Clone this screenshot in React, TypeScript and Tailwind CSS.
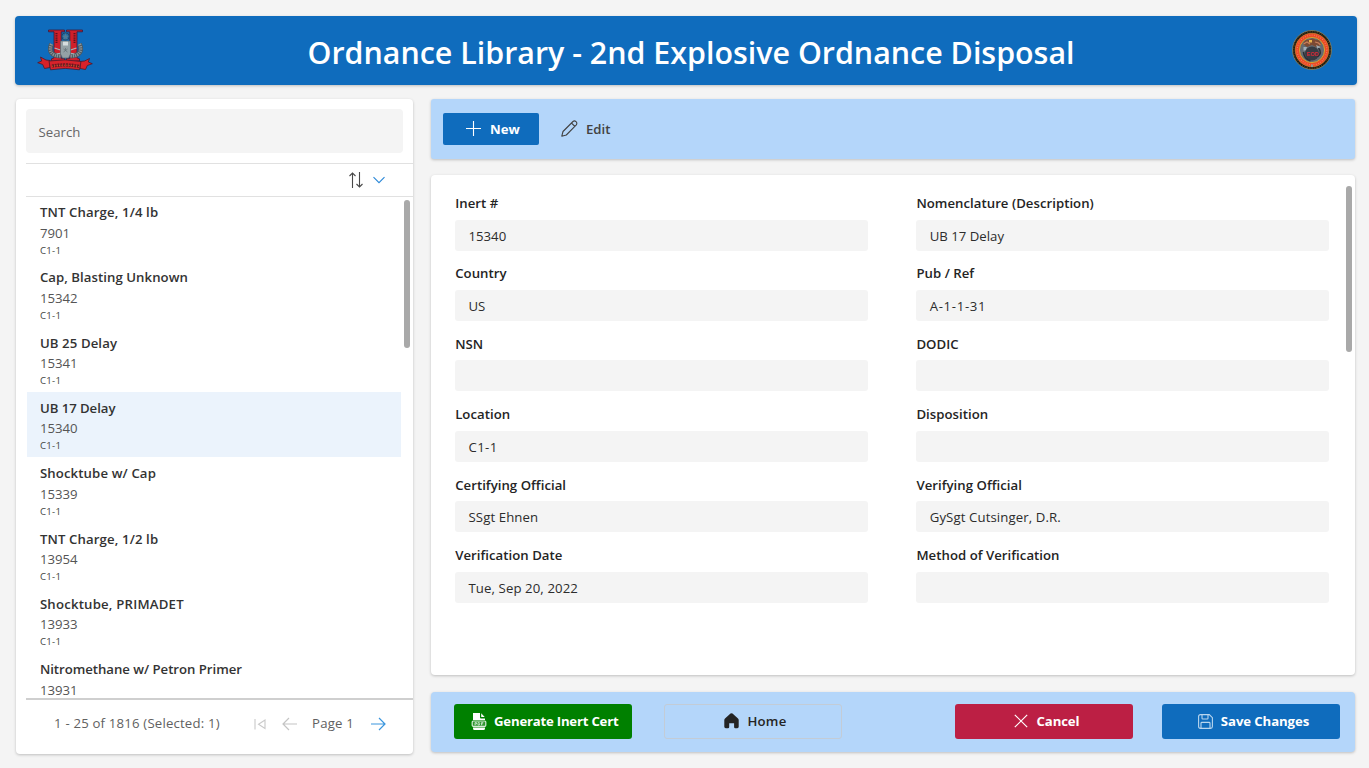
import type { ReactNode } from 'react';

type Item = { name: string; id: string; loc: string; track: string };

const items: Item[] = [
  { name: 'TNT Charge, 1/4 lb', id: '7901', loc: 'C1-1', track: 'tracking-[0.12px]' },
  { name: 'Cap, Blasting Unknown', id: '15342', loc: 'C1-1', track: 'tracking-[0.05px]' },
  { name: 'UB 25 Delay', id: '15341', loc: 'C1-1', track: 'tracking-[0.1px]' },
  { name: 'UB 17 Delay', id: '15340', loc: 'C1-1', track: 'tracking-[-0.05px]' },
  { name: 'Shocktube w/ Cap', id: '15339', loc: 'C1-1', track: 'tracking-[0.12px]' },
  { name: 'TNT Charge, 1/2 lb', id: '13954', loc: 'C1-1', track: 'tracking-[0.12px]' },
  { name: 'Shocktube, PRIMADET', id: '13933', loc: 'C1-1', track: 'tracking-[0.2px]' },
  { name: 'Nitromethane w/ Petron Primer', id: '13931', loc: '', track: 'tracking-[-0.03px]' },
];

const fields: { label: string; value: string; track?: string }[] = [
  { label: 'Inert #', value: '15340' },
  { label: 'Nomenclature (Description)', value: 'UB 17 Delay' },
  { label: 'Country', value: 'US' },
  { label: 'Pub / Ref', value: 'A-1-1-31', track: 'tracking-[0.65px]' },
  { label: 'NSN', value: '' },
  { label: 'DODIC', value: '' },
  { label: 'Location', value: 'C1-1', track: 'tracking-[0.4px]' },
  { label: 'Disposition', value: '' },
  { label: 'Certifying Official', value: 'SSgt Ehnen', track: 'tracking-[0.1px]' },
  { label: 'Verifying Official', value: 'GySgt Cutsinger, D.R.', track: 'tracking-[0.1px]' },
  { label: 'Verification Date', value: 'Tue, Sep 20, 2022', track: 'tracking-[0.1px]' },
  { label: 'Method of Verification', value: '' },
];

function UnitCrest() {
  return (
    <svg width="56" height="42" viewBox="0 0 56 42">
      <g fill="#d01f2a" stroke="#3b1a3a" strokeWidth=".8">
        <path d="M11.500 1h16v1.800h-3.300v26.500h3.300V32h-13v-2.200l2.500-1V2.800h-5.500z" />
        <path d="M29.500 1h16v1.800H40v26l2.500 1V32h-13v-2.700h3.300V2.800h-3.300z" />
      </g>
      <path d="M19.500 4v10M37.500 4v10" stroke="#5c1420" strokeWidth="2" strokeDasharray="1.300 .9" />
      <g fill="none" stroke="#4c565c" strokeWidth="4.800">
        <path d="M14.500 15c-3 7 0 12 9 12M42.500 15c3 7 0 12-9 12" />
      </g>
      <g fill="none" stroke="#88949a" strokeWidth="3.200" strokeDasharray="1.300 .9">
        <path d="M14.500 15c-3 7 0 12 9 12M42.500 15c3 7 0 12-9 12" />
      </g>
      <circle cx="28.500" cy="7.500" r="3.700" fill="#1e6ba8" stroke="#273d51" strokeWidth=".8" />
      <path d="m28.500 4.300 1 2.200 2.300.3-1.700 1.600.4 2.400-2-1.200-2 1.200.4-2.400-1.700-1.600 2.300-.3z" fill="#4f7a96" />
      <path d="m17.500 19 6 2m16-2-6 2m-14 4 5-1m13 1-5-1" stroke="#a9b5b9" strokeWidth="1.200" />
      <path d="M23.500 12h10v13l-2 4h-6l-2-4z" fill="#94a1a6" stroke="#59676e" strokeWidth=".7" />
      <path d="M26 12.700h5v3.800h-5z" fill="#d5dcde" />
      <path d="M28.500 19v3M26.500 20l4 3m-4 0 4-3" stroke="#66747a" strokeWidth=".8" />
      <g fill="#d8222a" stroke="#4a1a2c" strokeWidth=".8">
        <path d="m3.500 28 5.500 3 4 .5v7l-5.500 1-1.800-4L.7 33.700l4-1.700z" />
        <path d="m52.500 29.500-5 2.500-4.500.5v7l5.500 1 1.800-4 5-1.800-4-1.700z" />
        <path d="M12 32q16-2.500 32 .5l-1.500 8.300q-14-2.800-29 0z" />
      </g>
      <path d="M15 37q13-2.300 27 .3" fill="none" stroke="#651a22" strokeWidth="3.300" strokeDasharray="2 .8" />
      <path d="M15 37.300q13-2.300 27 .3" fill="none" stroke="#c48434" strokeWidth=".9" strokeDasharray="1 1.400" />
    </svg>
  );
}

function UnitSeal() {
  return (
    <svg width="40" height="40" viewBox="0 0 40 40">
      <circle cx="20" cy="20" r="19.500" fill="#15120e" stroke="#8f855c" strokeWidth=".8" />
      <circle cx="20" cy="20" r="18.200" fill="none" stroke="#8a7136" strokeWidth=".6" strokeDasharray="1.500 1" />
      <circle cx="20" cy="20" r="16.800" fill="#ec4a26" stroke="#e09a38" strokeWidth=".6" />
      <circle cx="20" cy="20" r="14.800" fill="none" stroke="#f08264" strokeWidth="1.200" strokeDasharray=".8 1.500" />
      <circle cx="20" cy="20" r="12.600" fill="#656b72" stroke="#d9a02a" strokeWidth="1" />
      <path d="M11 14q2-5 6-4 3-3 7 0 4-1 5 5l-5 2-4-2-5 2z" fill="#7b4a34" />
      <path d="m11.500 14 3.500-2 3 2m5-2 3.500 1 2 2" stroke="#c97f5c" strokeWidth="1.300" fill="none" />
      <path d="M17 10h3v2.500h-3z" fill="#e6b24c" />
      <path d="M11.500 17h3.500l-1 3.500h-2.500zM24 15l4.500 2-2.500 2.500z" fill="#a2adb6" />
      <circle cx="20" cy="23.500" r="7" fill="#363b43" />
      <path d="M11.500 22q.5 7 7 9m8-13q4 5-1 9" fill="none" stroke="#2a2e35" strokeWidth="1.600" />
      <text x="20.500" y="25.700" textAnchor="middle" className="fill-[#d52835] font-['Liberation_Sans',sans-serif] text-[5.500px] font-bold">EOD</text>
      <path d="M19 34.500h2v2.500h-2z" fill="#8f9692" />
    </svg>
  );
}

function Field({ label, value, track = '' }: { label: string; value: string; track?: string }) {
  return (
    <div className="h-[70.4px]">
      <div className="h-[28.700px] pt-[3px] text-[13.200px] leading-[18px] font-semibold tracking-[0.03px] text-[#242424]">{label}</div>
      <div className={`h-[31px] rounded-[3px] bg-[#f4f4f4] px-[13.300px] text-[13.200px] leading-[33.600px] text-[#2c2c2c] ${track}`}>{value}</div>
    </div>
  );
}

function ActionButton({ className, children }: { className: string; children: ReactNode }) {
  return (
    <button className={`flex h-[35px] w-[178px] shrink-0 items-center justify-center rounded-[3px] text-[13.200px] whitespace-nowrap ${className}`}>
      {children}
    </button>
  );
}

const shadow = 'shadow-[0_1px_3px_rgba(0,0,0,0.22)]';

export default function App() {
  return (
    <div className="flex h-[768px] w-[1369px] flex-col overflow-hidden bg-[#f4f4f4] pt-4 font-['Open_Sans','Noto_Sans',sans-serif]">
      <header className={`ml-[15.400px] flex h-[68.500px] w-[1341.300px] shrink-0 items-center justify-between rounded bg-[#0f6cbd] pr-[24.500px] pl-[21.500px] ${shadow}`}>
        <UnitCrest />
        <h1 className="-ml-[3px] pt-[6px] text-[30.400px] leading-10 font-semibold whitespace-nowrap text-white">Ordnance Library - 2nd Explosive Ordnance Disposal</h1>
        <UnitSeal />
      </header>

      <div className="mt-[14.500px] ml-[15.600px] flex gap-[18.400px]">
        <aside className={`flex h-[655px] w-[397px] flex-col rounded bg-white pl-[10px] ${shadow}`}>
          <div className="mt-[10px] h-[44px] w-[377px] shrink-0 rounded bg-[#f4f4f4] pl-[13px] text-[13.200px] leading-[46px] text-[#666]">Search</div>
          <div className="mt-[10px] flex h-[34px] shrink-0 items-center border-y border-[#e1e1e1] pl-[322px]">
            <svg width="17" height="18" viewBox="0 0 17 18" fill="none" stroke="#484848" strokeWidth="1.100">
              <path d="M4.500 17V2M1.500 5l3-3 3 3M11.500 1v15M8.500 13l3 3 3-3" />
            </svg>
            <svg className="ml-[7px]" width="14" height="8" viewBox="0 0 14 8" fill="none" stroke="#2b88d8" strokeWidth="1.100">
              <path d="m1.500 1.200 5.500 5.500 5.500-5.500" />
            </svg>
          </div>
          <div className="flex h-[503px] shrink-0 justify-between overflow-hidden border-b-2 border-[#cfcfcf]">
            <div className="-mt-[.9px] w-[375.500px]">
              {items.map((it) => (
                <div
                  key={it.id}
                  className={`ml-px h-[65.330px] pl-[13.300px] ${it.id === '15340' ? 'bg-[#ebf3fc]' : ''}`}
                >
                  <div className={`pt-[6px] text-[13.200px] leading-5 font-semibold text-[#333] ${it.track}`}>{it.name}</div>
                  <div className="pt-[.4px] text-[13.200px] leading-5 text-[#555]">{it.id}</div>
                  {it.loc && <div className="text-[9.600px] leading-[15px] tracking-[0.3px] text-[#444]">{it.loc}</div>}
                </div>
              ))}
            </div>
            <div className="mt-[3px] mr-[3px] h-[148px] w-[6px] rounded-full bg-[#a9a9a9]" />
          </div>
          <div className="flex h-[46px] items-center pt-px text-[13.200px] text-[#616161]">
            <span className="w-[227px] shrink-0 pl-[28.500px] tracking-[0.180px] whitespace-nowrap">1 - 25 of 1816 (Selected: 1)</span>
            <svg className="shrink-0" width="14" height="14" viewBox="0 0 14 14" fill="none" stroke="#c9c9c9" strokeWidth="1.100">
              <path d="M2 2v10.500M12 3v8.500L5.500 7.200z" />
            </svg>
            <svg className="ml-[14.500px] shrink-0" width="17" height="14" viewBox="0 0 17 14" fill="none" stroke="#c4c4c4" strokeWidth="1.200">
              <path d="M16 7H2M8 1 2 7l6 6" />
            </svg>
            <span className="ml-[14px] w-[57.500px] shrink-0 tracking-[0.2px] whitespace-nowrap">Page 1</span>
            <svg className="shrink-0" width="17" height="14" viewBox="0 0 17 14" fill="none" stroke="#3a96dd" strokeWidth="1.200">
              <path d="M1 7h14M9 1l6 6-6 6" />
            </svg>
          </div>
        </aside>

        <main className="flex w-[923.700px] flex-col">
          <div className={`flex h-[59.500px] items-center rounded-[3px] bg-[#b4d6fa] pl-[12px] text-[13.200px] ${shadow}`}>
            <button className="flex h-[31.500px] w-[96px] items-center rounded-[2px] bg-[#0f6cbd] pl-[23px] font-bold text-white">
              <svg width="15" height="15" viewBox="0 0 15 15" stroke="white" strokeWidth="1.100">
                <path d="M7.500 0v15M0 7.500h15" />
              </svg>
              <span className="ml-[9px] pt-[2px]">New</span>
            </button>
            <button className="ml-[22px] flex items-center font-semibold text-[#424242]">
              <svg width="17" height="17" viewBox="0 0 17 17" fill="none" stroke="#424242" strokeWidth="1.100" strokeLinejoin="round">
                <path d="M.8 16.200 2 11.500 12 1.500q1.500-1.200 3 .2t.3 3.200L5.300 15zM10.500 3l3.300 3.400" />
              </svg>
              <span className="ml-[8px] pt-[2px]">Edit</span>
            </button>
          </div>

          <section className={`mt-[16.500px] flex h-[500px] justify-between rounded bg-white pt-[16px] pr-[3px] pl-[24.200px] ${shadow}`}>
            <div className="grid w-[874px] grid-cols-2 content-start gap-x-[48.500px]">
              {fields.map((f) => (
                <Field key={f.label} label={f.label} value={f.value} track={f.track} />
              ))}
            </div>
            <div className="-mt-[5px] h-[166px] w-[6px] rounded-full bg-[#a9a9a9]" />
          </section>

          <footer className={`mt-[17px] flex h-[60px] items-center rounded bg-[#b4d6fa] pb-[2px] pl-[23px] ${shadow}`}>
            <ActionButton className="bg-[#008000] pl-[3px] font-bold text-white">
              <svg width="16" height="17" viewBox="0 0 16 17">
                <path d="M2 0h7v4.500q0 1 1 1h4V7H2zM10.200.3 13.700 4h-3.500zM2 14.500h12v1q0 1.500-1.500 1.500h-9Q2 17 2 15.500z" fill="white" />
                <rect x="1.200" y="8" width="13.600" height="5.300" rx="1" fill="#2f962f" stroke="#d7ecd7" strokeWidth="1.200" />
                <path d="M4 12.300V9.600h1.500v1.400H4m3-1.400h1.300q.9 1.200 0 2.400H7zm5.300 0h-1.800v2.700m0-1.500h1.600" fill="none" stroke="#d7ecd7" strokeWidth=".8" />
              </svg>
              <span className="ml-[7.500px] pt-[2px] tracking-[-0.220px]">Generate Inert Cert</span>
            </ActionButton>
            <ActionButton className="ml-[32.500px] border border-[#c3ccd6] pl-[3px] font-semibold text-[#242424]">
              <svg width="15" height="16" viewBox="0 0 15 16">
                <path d="M6.500.6q1-.8 2 0l5.500 4.900q.7.600.7 1.500v6.800q0 1.400-1.400 1.400h-2q-1.200 0-1.200-1.200v-3.800H5.200V14q0 1.200-1.200 1.200H1.800Q.3 15.200.3 13.800V7q0-.9.700-1.500z" fill="#242424" />
              </svg>
              <span className="ml-[9px] pt-[2px] tracking-[0.2px]">Home</span>
            </ActionButton>
            <ActionButton className="ml-[113px] bg-[#bc1f44] pl-[4px] font-bold text-white">
              <svg width="14" height="14" viewBox="0 0 14 14" stroke="white" strokeWidth="1.200">
                <path d="m.8.8 12.400 12.400M13.200.8.8 13.200" />
              </svg>
              <span className="ml-[9px] pt-[2px] tracking-[-0.150px]">Cancel</span>
            </ActionButton>
            <ActionButton className="ml-[29px] bg-[#0f6cbd] pl-[4px] font-bold text-white">
              <svg width="15" height="15" viewBox="0 0 15 15" fill="none" stroke="#b9d6ee" strokeWidth="1.100">
                <path d="M2.500.6h8.800l3.100 3.100v8.800q0 1.900-1.900 1.900h-10Q.6 14.400.6 12.500v-10Q.6.600 2.500.6zM4 1v3.200q0 .8.800.8h4.400q.8 0 .8-.8V1M3 14V9.300q0-.9.900-.9h7.200q.9 0 .9.900V14" />
              </svg>
              <span className="ml-2 pt-[2px] tracking-[-0.1px]">Save Changes</span>
            </ActionButton>
          </footer>
        </main>
      </div>
    </div>
  );
}
